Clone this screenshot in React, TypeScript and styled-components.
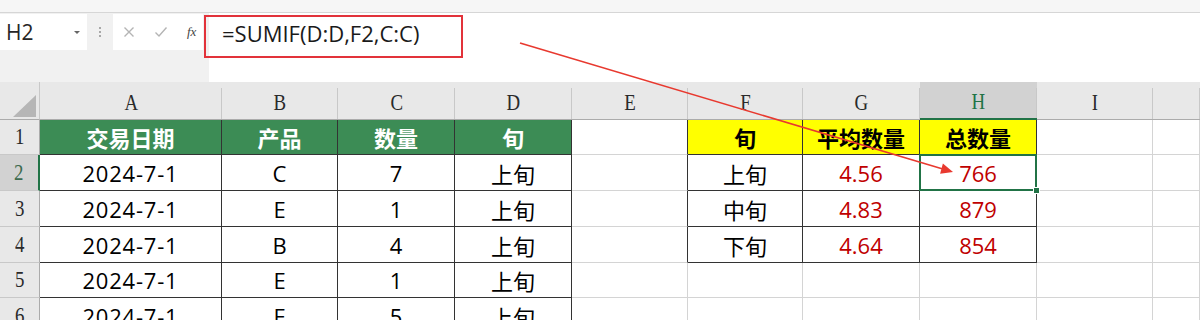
import React from "react";
import styled, { createGlobalStyle } from "styled-components";

const GlobalStyle = createGlobalStyle`
  html, body { margin: 0; padding: 0; background: #ffffff; overflow: hidden; }
`;

const GRID = "#d4d4d4";
const LINE = "#333333";
const GREEN = "#217346";

const Page = styled.div`
  position: relative;
  width: 1200px;
  height: 320px;
  overflow: hidden;
  background: #ffffff;
  font-family: "Open Sans", "Noto Sans CJK SC", sans-serif;
`;

const TopStrip = styled.div`
  height: 12px;
  background: #f6f6f6;
  border-bottom: 1px solid #d6d6d6;
`;

const FormulaRow = styled.div`
  display: flex;
  align-items: flex-start;
  height: 69px;
  background: #f1f1f1;
`;

const NameBox = styled.div`
  box-sizing: border-box;
  margin-top: 1px;
  width: 87px;
  height: 36px;
  background: #ffffff;
  display: flex;
  align-items: center;
  justify-content: space-between;
  padding: 0 7px 0 6px;
  font-size: 21px;
  color: #262626;
`;

const Caret = styled.span`
  width: 0;
  height: 0;
  border-left: 3px solid transparent;
  border-right: 3px solid transparent;
  border-top: 3px solid #666;
`;

const Dots = styled.div`
  width: 26px;
  height: 38px;
  display: flex;
  flex-direction: column;
  align-items: center;
  justify-content: center;
  gap: 2px;
`;

const Dot = styled.span`
  width: 2px;
  height: 2px;
  background: #a8a8a8;
`;

const FxBox = styled.div`
  box-sizing: border-box;
  margin-top: 1px;
  width: 90px;
  height: 36px;
  background: #ffffff;
  display: flex;
  align-items: center;
  padding-left: 10px;
  gap: 19px;
`;

const FxIcon = styled.span`
  font-family: "Liberation Serif", serif;
  font-style: italic;
  font-size: 13px;
  color: #444;
`;

const FormulaInput = styled.div`
  box-sizing: border-box;
  margin-left: 6px;
  flex: 1;
  height: 69px;
  background: #ffffff;
  padding: 2px 0 0 13px;
  font-size: 22px;
  line-height: 36px;
  color: #1a1a1a;
  white-space: nowrap;
`;

const RedBox = styled.div`
  position: absolute;
  left: 204px;
  top: 15px;
  width: 259px;
  height: 43px;
  box-sizing: border-box;
  border: 2px solid #e2323a;
  pointer-events: none;
`;

const Sheet = styled.div`
  display: grid;
  grid-template-columns: 40px 182px 116px 117px 117px 116px 115px 117px 117px 116px 1fr;
  grid-template-rows: 38px 35px 36px 36px 36px 35px 36px;
  background: #ffffff;
`;

const HeadCell = styled.div<{ $active?: boolean }>`
  position: relative;
  box-sizing: border-box;
  display: flex;
  align-items: center;
  justify-content: center;
  padding-top: 4px;
  background: ${(p) => (p.$active ? "#d2d2d2" : "#e8e8e8")};
  color: ${(p) => (p.$active ? GREEN : "#2a2a2a")};
  border-bottom: ${(p) => (p.$active ? `2px solid ${GREEN}` : "1px solid #ababab")};
  font-family: "Liberation Serif", serif;
  font-size: 23px;
  &::after {
    content: "";
    position: absolute;
    right: 0;
    top: 6px;
    bottom: 0;
    width: 1px;
    background: #c8c8c8;
  }
`;

const Corner = styled.div`
  position: relative;
  box-sizing: border-box;
  background: #e8e8e8;
  border-bottom: 1px solid #ababab;
  border-right: 1px solid #c8c8c8;
  display: flex;
  align-items: flex-end;
  justify-content: flex-end;
  padding: 0 3px 2px 0;
`;

const RowHead = styled.div<{ $active?: boolean }>`
  box-sizing: border-box;
  display: flex;
  align-items: center;
  justify-content: center;
  background: ${(p) => (p.$active ? "#d2d2d2" : "#e8e8e8")};
  color: ${(p) => (p.$active ? "#3d6b4f" : "#2a2a2a")};
  border-bottom: 1px solid #c8c8c8;
  border-right: ${(p) => (p.$active ? `2px solid ${GREEN}` : "1px solid #ababab")};
  font-family: "Liberation Serif", serif;
  font-size: 23px;
`;

const Narrow = styled.span`
  display: inline-block;
  transform: scaleX(0.82);
`;

const Cell = styled.div<{
  $bg: string;
  $color: string;
  $bold: boolean;
  $br: string;
  $bb: string;
  $wide?: boolean;
  $selected?: boolean;
}>`
  position: relative;
  box-sizing: border-box;
  display: flex;
  align-items: center;
  justify-content: center;
  background: ${(p) => p.$bg};
  color: ${(p) => p.$color};
  font-weight: ${(p) => (p.$bold ? 700 : 400)};
  border-right: 1px solid ${(p) => p.$br};
  border-bottom: 1px solid ${(p) => p.$bb};
  font-size: 22px;
  letter-spacing: ${(p) => (p.$wide ? "0.8px" : "0")};
  white-space: nowrap;
  ${(p) =>
    p.$selected &&
    `
    &::after {
      content: "";
      position: absolute;
      left: -1px;
      top: -1px;
      right: -1px;
      bottom: -1px;
      border: 2px solid ${GREEN};
    }
    &::before {
      content: "";
      position: absolute;
      right: -4px;
      bottom: -4px;
      width: 5px;
      height: 5px;
      background: ${GREEN};
      border: 1px solid #ffffff;
      z-index: 2;
    }
  `}
`;

const Overlay = styled.svg`
  position: absolute;
  left: 0;
  top: 0;
  pointer-events: none;
`;

const COLS = ["A", "B", "C", "D", "E", "F", "G", "H", "I", ""];

const DATA: string[][] = [
  ["交易日期", "产品", "数量", "旬", "", "旬", "平均数量", "总数量", "", ""],
  ["2024-7-1", "C", "7", "上旬", "", "上旬", "4.56", "766", "", ""],
  ["2024-7-1", "E", "1", "上旬", "", "中旬", "4.83", "879", "", ""],
  ["2024-7-1", "B", "4", "上旬", "", "下旬", "4.64", "854", "", ""],
  ["2024-7-1", "E", "1", "上旬", "", "", "", "", "", ""],
  ["2024-7-1", "E", "5", "上旬", "", "", "", "", "", ""],
];

const inTable = (r: number, c: number) =>
  (c >= 0 && c <= 3 && r >= 0 && r <= 6) || (c >= 5 && c <= 7 && r >= 0 && r <= 3);

function cellStyle(r: number, c: number) {
  let bg = "#ffffff";
  let color = "#000000";
  let bold = false;
  if (r === 0 && c <= 3) {
    bg = "#3c8c55";
    color = "#ffffff";
    bold = true;
  } else if (r === 0 && c >= 5 && c <= 7) {
    bg = "#ffff00";
    color = "#000000";
    bold = true;
  } else if (r >= 1 && r <= 3 && (c === 6 || c === 7)) {
    color = "#c00000";
  }
  const br = inTable(r, c) || inTable(r, c + 1) ? LINE : GRID;
  const bb = inTable(r, c) || inTable(r + 1, c) ? LINE : GRID;
  return { bg, color, bold, br, bb };
}

export default function App() {
  return (
    <Page>
      <GlobalStyle />
      <TopStrip />
      <FormulaRow>
        <NameBox>
          <span>H2</span>
          <Caret />
        </NameBox>
        <Dots>
          <Dot />
          <Dot />
          <Dot />
        </Dots>
        <FxBox>
          <svg width="12" height="12" viewBox="0 0 12 12">
            <path d="M1.5 1.5 L10.5 10.5 M10.5 1.5 L1.5 10.5" stroke="#b4b4b4" strokeWidth="1.4" fill="none" />
          </svg>
          <svg width="14" height="12" viewBox="0 0 14 12">
            <path d="M1.5 6.5 L5 10 L12.5 1.5" stroke="#b4b4b4" strokeWidth="1.4" fill="none" />
          </svg>
          <FxIcon>fx</FxIcon>
        </FxBox>
        <FormulaInput>=SUMIF(D:D,F2,C:C)</FormulaInput>
      </FormulaRow>
      <Sheet>
        <Corner>
          <svg width="23" height="22" viewBox="0 0 23 22">
            <polygon points="23,0 23,22 0,22" fill="#b6b6b6" />
          </svg>
        </Corner>
        {COLS.map((l, i) => (
          <HeadCell key={"h" + i} $active={l === "H"}>
            <Narrow>{l}</Narrow>
          </HeadCell>
        ))}
        {DATA.map((row, r) => (
          <React.Fragment key={"r" + r}>
            <RowHead $active={r === 1}>
              <Narrow>{r + 1}</Narrow>
            </RowHead>
            {row.map((v, c) => {
              const s = cellStyle(r, c);
              return (
                <Cell
                  key={c}
                  $bg={s.bg}
                  $color={s.color}
                  $bold={s.bold}
                  $br={s.br}
                  $bb={s.bb}
                  $wide={v.includes("-")}
                  $selected={r === 1 && c === 7}
                >
                  {v}
                </Cell>
              );
            })}
          </React.Fragment>
        ))}
      </Sheet>
      <RedBox />
      <Overlay width="1200" height="320" viewBox="0 0 1200 320">
        <path d="M520 43 L942 168.8" stroke="#e8392f" strokeWidth="1.6" fill="none" />
        <polygon points="953,172 942.9,163.6 940.1,173.8" fill="#e8392f" />
      </Overlay>
    </Page>
  );
}
